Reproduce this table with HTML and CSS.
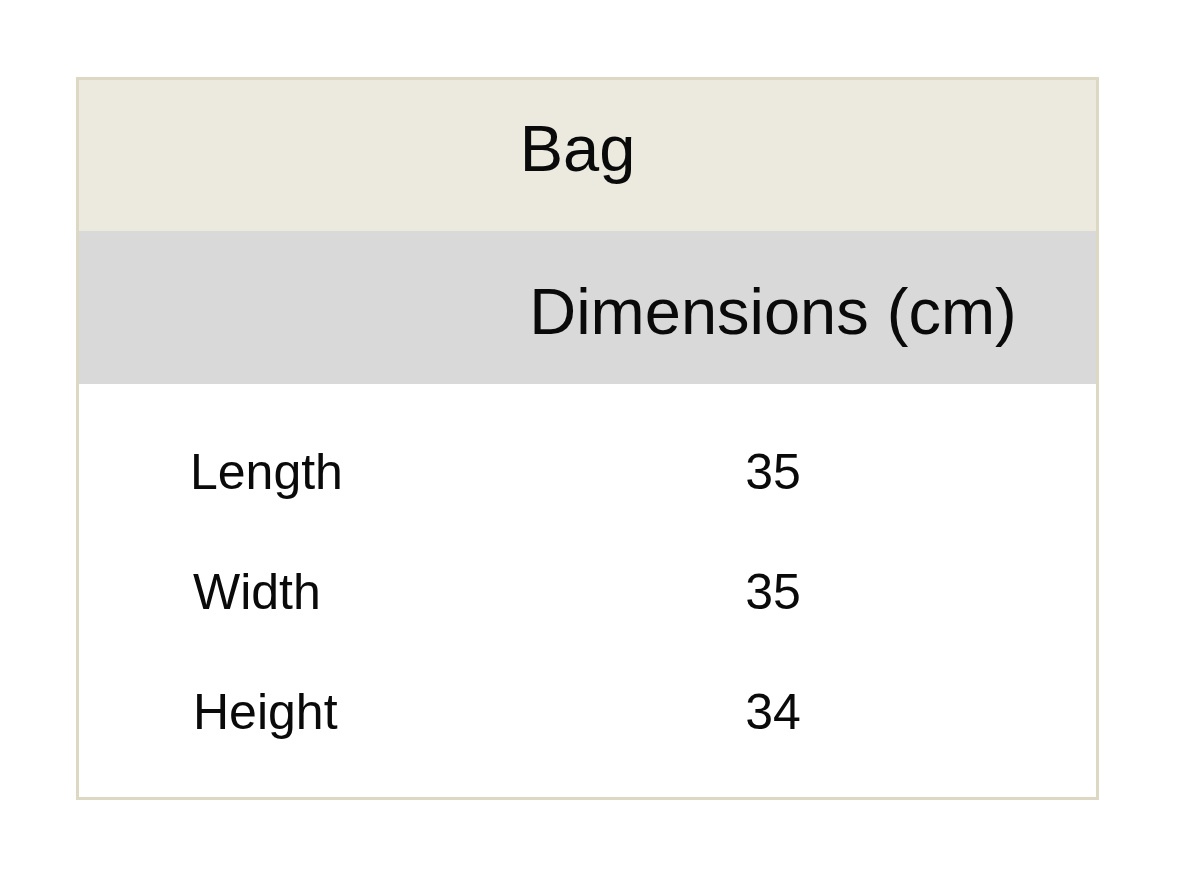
FILE: index.html
```html
<!DOCTYPE html>
<html lang="en">
<head>
<meta charset="utf-8">
<title>Bag dimensions</title>
<link rel="stylesheet" href="styles.css">
</head>
<body>
<div class="size-table">
  <div class="title-row">Bag</div>
  <div class="head-row">
    <div class="cell-label"></div>
    <div class="cell-value">Dimensions (cm)</div>
  </div>
  <div class="body">
    <div class="row"><div class="cell-label">Length</div><div class="cell-value">35</div></div>
    <div class="row"><div class="cell-label label-indent">Width</div><div class="cell-value">35</div></div>
    <div class="row"><div class="cell-label label-indent">Height</div><div class="cell-value">34</div></div>
  </div>
</div>
</body>
</html>
```

FILE: styles.css
```css
html, body {
  margin: 0;
  background: #ffffff;
}
body {
  padding: 77px 0 0 76px;
  font-family: "Liberation Sans", Arial, sans-serif;
  color: #0a0a0a;
}
.size-table {
  width: 1017px;
  border: 3px solid #dcd8c4;
  background: #ffffff;
}
.title-row {
  background: #eceadf;
  height: 151px;
  box-sizing: border-box;
  padding: 29px 20px 0 0;
  text-align: center;
  font-size: 65px;
  line-height: 80px;
}
.head-row {
  display: grid;
  grid-template-columns: 371px 1fr;
  background: #d9d9d9;
  height: 153px;
  box-sizing: border-box;
  padding-top: 41px;
  font-size: 65px;
  line-height: 80px;
}
.cell-value {
  text-align: center;
}
.body {
  padding: 28px 0 25px;
}
.row {
  display: grid;
  grid-template-columns: 371px 1fr;
  height: 120px;
  font-size: 50px;
  line-height: 120px;
}
.row .cell-label {
  padding-left: 111px;
}
.row .label-indent {
  padding-left: 114px;
}
```
